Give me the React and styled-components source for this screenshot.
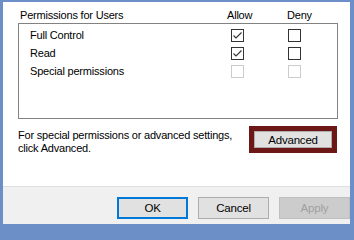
import React from "react";
import styled, { createGlobalStyle } from "styled-components";

const Global = createGlobalStyle`
  html, body { margin: 0; padding: 0; background: #6b8fc6; overflow: hidden; }
  body {
    font-family: "Liberation Sans", Arial, sans-serif;
    font-size: 11px;
    letter-spacing: -0.2px;
    color: #000;
  }
`;

const Frame = styled.div`
  width: 354px;
  height: 228px;
  box-sizing: border-box;
  padding: 2px 4px 4px 3px;
  background: #6b8fc6;
  display: flex;
  overflow: hidden;
`;

const Window = styled.div`
  flex: 1;
  height: 222px;
  display: flex;
  flex-direction: column;
  background: #ffffff;
  overflow: hidden;
`;

const Content = styled.div`
  height: 185px;
  flex-shrink: 0;
  box-sizing: border-box;
  padding: 5px 12px 0 15px;
  border-bottom: 1px solid #dfdfdf;
`;

const HeaderRow = styled.div`
  display: grid;
  grid-template-columns: 1fr 60px 51px;
  height: 16px;
  align-items: center;
  padding-left: 2px;
`;

const ListBox = styled.div`
  height: 96px;
  box-sizing: border-box;
  border: 1px solid #828282;
  padding: 2px 0 0 11px;
  display: flex;
  flex-direction: column;
`;

const PermRow = styled.div`
  display: grid;
  grid-template-columns: 1fr 57px 49px;
  height: 18px;
  align-items: center;
`;

const Cell = styled.div`
  display: flex;
`;

const Box = styled.span`
  width: 13px;
  height: 13px;
  box-sizing: border-box;
  border: 1px solid ${(p) => (p.$disabled ? "#cccccc" : "#333333")};
  background: #fff;
  display: inline-flex;
  align-items: center;
  justify-content: center;
`;

const Check = () => (
  <svg width="11" height="11" viewBox="0 0 11 11">
    <path d="M1.5 5.5 L4 8 L9.5 2.5" fill="none" stroke="#333" strokeWidth="1.1" />
  </svg>
);

const InfoRow = styled.div`
  display: flex;
  justify-content: space-between;
  align-items: flex-start;
  margin-top: 7px;
`;

const InfoText = styled.p`
  margin: 3px 0 0 0;
  line-height: 13px;
  white-space: nowrap;
`;

const Highlight = styled.div`
  border: 5px solid #6e1717;
  margin-right: 1px;
`;

const Button = styled.button`
  font-family: "Liberation Sans", Arial, sans-serif;
  font-size: 11.5px;
  letter-spacing: -0.2px;
  width: ${(p) => p.$w || 71}px;
  height: ${(p) => p.$h || 22}px;
  box-sizing: border-box;
  padding: 0;
  flex-shrink: 0;
  background: ${(p) => (p.$disabled ? "#cccccc" : "#e1e1e1")};
  color: ${(p) => (p.$disabled ? "#a0a0a0" : "#000")};
  border: 1px solid ${(p) => (p.$primary ? "#0078d7" : p.$disabled ? "#bfbfbf" : "#adadad")};
  box-shadow: ${(p) => (p.$primary ? "inset 0 0 0 1px #0078d7" : "none")};
  display: flex;
  align-items: center;
  justify-content: center;
`;

const Footer = styled.div`
  flex: 1;
  background: #f0f0f0;
  display: flex;
  gap: 10px;
  padding: 10px 0 0 114px;
  overflow: hidden;
`;

const rows = [
  { name: "Full Control", allow: true, deny: false, disabled: false },
  { name: "Read", allow: true, deny: false, disabled: false },
  { name: "Special permissions", allow: false, deny: false, disabled: true },
];

export default function App() {
  return (
    <>
      <Global />
      <Frame>
        <Window>
          <Content>
            <HeaderRow>
              <span>Permissions for Users</span>
              <span>Allow</span>
              <span>Deny</span>
            </HeaderRow>
            <ListBox>
              {rows.map((r) => (
                <PermRow key={r.name}>
                  <span>{r.name}</span>
                  <Cell>
                    <Box $disabled={r.disabled}>{r.allow && <Check />}</Box>
                  </Cell>
                  <Cell>
                    <Box $disabled={r.disabled}>{r.deny && <Check />}</Box>
                  </Cell>
                </PermRow>
              ))}
            </ListBox>
            <InfoRow>
              <InfoText>
                For special permissions or advanced settings,
                <br />
                click Advanced.
              </InfoText>
              <Highlight>
                <Button $w={78} $h={17}>Advanced</Button>
              </Highlight>
            </InfoRow>
          </Content>
          <Footer>
            <Button $primary>OK</Button>
            <Button>Cancel</Button>
            <Button $disabled>Apply</Button>
          </Footer>
        </Window>
      </Frame>
    </>
  );
}
